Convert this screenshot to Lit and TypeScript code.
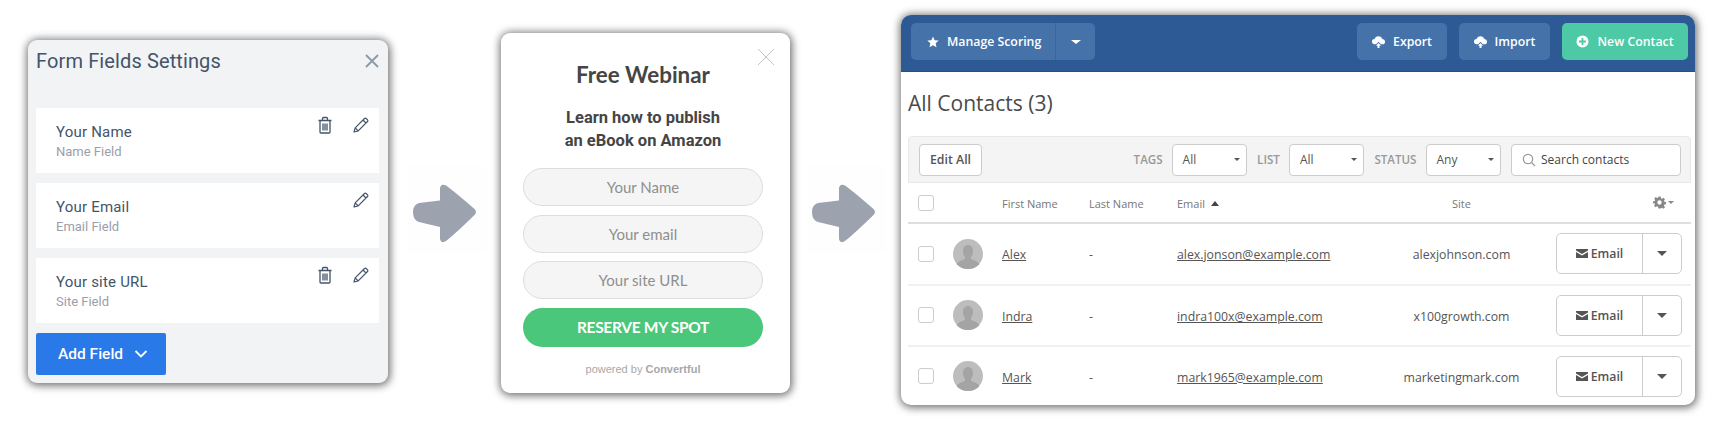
import { LitElement, html, css } from "lit";
import { customElement } from "lit/decorators.js";

const trash = html`<svg class="ic trash" width="16" height="18" viewBox="0 0 16 18" fill="none" stroke="#44546a" stroke-width="1.300"><path d="M1.500 4.500h13M3 4.500V16a1 1 0 0 0 1 1h8a1 1 0 0 0 1-1V4.500M5.500 4.500V2.500a1 1 0 0 1 1-1h3a1 1 0 0 1 1 1v2M6 7.500v7M8 7.500v7M10 7.500v7"/></svg>`;
const pencil = html`<svg class="ic" width="16" height="16" viewBox="0 0 16 16" fill="none" stroke="#44546a" stroke-width="1.200" stroke-linejoin="round"><path d="M1 15l1.200-4.200L11.500 1.500a1.200 1.200 0 0 1 1.700 0l1.300 1.300a1.200 1.200 0 0 1 0 1.700L5.200 13.800zM2.200 10.800l3 3M10 3l3 3"/></svg>`;
const cloud = html`<svg width="13" height="12" viewBox="0 0 13 12" fill="#fff"><path d="M2.800 8.300a2.700 2.700 0 0 1-.3-5.400A3.900 3.900 0 0 1 6.500.2a3.900 3.900 0 0 1 3.900 2.700 2.700 2.700 0 0 1-.2 5.400H8.900L6.500 5.700 4.100 8.300z"/><path d="M6.500 7 9 9.700H7.500V12h-2V9.700H4z"/></svg>`;
const caret = (w = 7, h = w) => html`<span class="caret" style="border-width:${h}px ${w}px 0"></span>`;
const avatar = html`<svg class="avatar" width="30" height="30" viewBox="0 0 30 30"><circle cx="15" cy="15" r="15" fill="#bdbdbd"/><path d="M3.500 25c1.500-2.300 3.500-3.300 6.700-4.300 1.800-.7 2-1.500 1.800-2.700-1.300-1.300-2-3.500-2-6.200C10 8.500 12 6 15 6s5 2.500 5 5.800c0 2.700-.7 4.900-2 6.200-.2 1.200 0 2 1.800 2.700 3.200 1 5.200 2 6.700 4.300A15 15 0 0 1 15 30 15 15 0 0 1 3.500 25z" fill="#a4a4a4"/></svg>`;
const arrow = html`<div class="arrowbox"><svg width="64" height="60" viewBox="0 0 64 60"><path d="M6 19 L27 16.500 L27 4 Q28 -1 33 1.500 Q42 8 61.500 25 Q64.500 28 61.500 31 Q42 50 33 57 Q28 60 27 55 L27 43 L6 38 Q0 36 0 28 Q0 21 6 19Z" fill="#9ca3af"/></svg></div>`;

@customElement("app-root")
export class AppRoot extends LitElement {
  static styles = css`
    :host { display: block; width: 1725px; height: 430px; background: #fff; overflow: hidden; }
    .page { display: flex; align-items: flex-start; height: 430px; }

    .arrowbox { width: 79px; height: 87px; margin-top: 166px; box-sizing: border-box; padding: 18px 0 0 5px; background: #fefefe; flex: none; }
    .arrowbox svg { display: block; }

    /* Form settings */
    .settings { flex: none; width: 360px; height: 343px; margin: 40px 20px 0 28px; box-sizing: border-box; padding: 0 9px 0 8px; background: #f1f3f5; border-radius: 9px; box-shadow: 0 0 8px 1px rgba(0,0,0,.35), 1px 2px 8px 1px rgba(0,0,0,.35); font-family: Roboto, sans-serif; color: #44546a; }
    .s-head { display: flex; justify-content: space-between; align-items: center; height: 42px; margin-bottom: 26px; }
    .s-title { font-size: 20px; letter-spacing: .12px; }
    .s-list { display: flex; flex-direction: column; gap: 10px; }
    .field { height: 65px; background: #fff; box-sizing: border-box; padding: 14px 10px 0 20px; display: flex; justify-content: space-between; }
    .f-name { font-size: 15px; line-height: 20px; letter-spacing: .2px; }
    .f-type { font-size: 13px; line-height: 18px; color: #9b9eaa; margin-top: 1px; }
    .f-actions { display: flex; gap: 19px; margin-top: -5px; align-items: flex-start; }
    .trash { margin-top: -1px; margin-right: 1px; }
    .add { margin-top: 10px; width: 130px; height: 42px; background: #2979e8; border-radius: 2px; color: #fff; font-size: 15.500px; font-weight: 500; display: flex; align-items: center; gap: 11px; box-sizing: border-box; padding-left: 22px; }

    /* Webinar */
    .webinar { flex: none; width: 289px; height: 360px; margin: 33px 17px 0 14px; box-sizing: border-box; padding: 0 27px 0 22px; background: #fff; border-radius: 9px; box-shadow: 0 0 8px 1px rgba(0,0,0,.35), 1px 2px 8px 1px rgba(0,0,0,.35); display: flex; flex-direction: column; align-items: stretch; text-align: center; position: relative; }
    .w-x { position: absolute; top: 15px; right: 15px; }
    .w-title { font-family: Lato, sans-serif; font-weight: 700; font-size: 22.400px; line-height: 30px; color: #454545; margin-top: 27px; }
    .w-sub { font-family: Roboto, sans-serif; font-weight: 700; font-size: 16.500px; line-height: 23px; color: #454545; margin-top: 16px; margin-bottom: 16px; }
    .w-input { height: 38px; box-sizing: border-box; border: 1px solid #ddd; border-radius: 19px; background: #f5f5f5; font-family: Lato, sans-serif; font-size: 15px; line-height: 36px; color: #8f8f8f; margin-bottom: 9px; }
    .w-input.mid { margin-bottom: 8px; }
    .w-btn { height: 39px; line-height: 39px; border-radius: 20px; background: #4ac77b; color: #fff; font-family: Lato, sans-serif; font-weight: 700; font-size: 15.500px; letter-spacing: -.3px; }
    .w-foot { font-family: "Liberation Sans", sans-serif; font-size: 11px; color: #a8a8a8; margin-top: 16px; }
    .w-foot b { font-weight: 700; }

    /* Contacts */
    .contacts { flex: none; width: 794px; height: 390px; margin: 15px 0 0 15px; background: #fff; border-radius: 10px; overflow: hidden; box-shadow: 0 0 8px 1px rgba(0,0,0,.35), 1px 2px 8px 1px rgba(0,0,0,.35); font-family: "Open Sans", sans-serif; color: #555; }
    .bar { height: 57px; background: #2d5a94; border-bottom: 1px solid #274f86; box-sizing: border-box; display: flex; align-items: flex-start; padding: 8px 7px 0 10px; gap: 12px; }
    .bar .spacer { flex: 1; }
    .hbtn { height: 37px; border-radius: 5px; background: #4672aa; color: #fff; font-size: 12.300px; font-weight: 600; display: flex; align-items: center; justify-content: center; gap: 8px; box-sizing: border-box; }
    .split { width: 184px; justify-content: flex-start; gap: 0; }
    .split .main { width: 145px; height: 37px; border-right: 1px solid #3d6599; box-sizing: border-box; display: flex; align-items: center; gap: 8px; padding-left: 16px; }
    .split .drop { flex: 1; display: flex; justify-content: center; }
    .caret { display: inline-block; width: 0; height: 0; border-style: solid; border-color: currentColor transparent transparent; }
    .export { width: 90px; }
    .import { width: 91px; }
    .new { width: 126px; background: #4dc9a5; }

    h2 { margin: 0; font-weight: 500; font-size: 21px; line-height: 28px; color: #4a4a4a; padding: 17px 0 0 7px; height: 47px; box-sizing: content-box; }

    .tools { margin: 0 4px 0 7px; height: 47px; box-sizing: border-box; background: #f4f4f4; border: 1px solid #e8e8e8; border-radius: 4px 4px 0 0; display: flex; align-items: center; padding: 0 9px 0 10px; font-size: 12px; }
    .tools .spacer { flex: 1; }
    .edit { width: 63px; height: 32px; background: #fff; border: 1px solid #ccc; border-radius: 4px; box-sizing: border-box; display: flex; align-items: center; justify-content: center; font-weight: 600; font-size: 12.300px; color: #555; }
    .lab { color: #999; font-weight: 600; font-size: 11.600px; margin-right: 9px; }
    .sel { width: 75.500px; height: 32px; box-sizing: border-box; background: #fff; border: 1px solid #ccc; border-radius: 4px; display: flex; align-items: center; justify-content: space-between; padding: 0 6px 0 10px; margin-right: 10px; color: #555; }
    .search { width: 170px; height: 32px; box-sizing: border-box; background: #fff; border: 1px solid #ccc; border-radius: 4px; display: flex; align-items: center; gap: 5px; padding-left: 10px; color: #444; }

    .row { margin: 0 4px 0 7px; display: grid; grid-template-columns: 35px 49px 87px 88px 215px 1fr 126px; align-items: center; box-sizing: border-box; padding-left: 10px; padding-right: 9px; font-size: 12.300px; height: 61.500px; border-bottom: 2px solid #f1f1f1; }
    .row.head { height: 41px; font-size: 11px; color: #777; border-bottom: 2px solid #dedede; }
    .row.last { border-bottom: 0; height: 58px; }
    .cb { width: 16px; height: 16px; box-sizing: border-box; border: 1px solid #ccc; border-radius: 3px; background: #fff; display: block; }
    .cell { padding-top: 2px; }
    .site { text-align: center; padding-right: 25px; }
    a { color: #555; text-decoration: underline; }
    .sort { display: inline-flex; align-items: center; gap: 6px; }
    .gear { justify-self: end; display: flex; align-items: center; gap: 2px; color: #888; margin-right: 8px; }
    .action { height: 41px; width: 126px; box-sizing: border-box; border: 1px solid #ccc; border-radius: 5px; display: flex; align-items: center; font-weight: 600; color: #555; }
    .action .m { width: 85px; height: 100%; border-right: 1px solid #ccc; display: flex; align-items: center; justify-content: center; gap: 3px; box-sizing: content-box; }
    .action .d { flex: 1; display: flex; justify-content: center; }
  `;

  field(name: string, type: string, del: boolean) {
    return html`<div class="field"><div><div class="f-name">${name}</div><div class="f-type">${type}</div></div>
      <div class="f-actions">${del ? trash : ""}${pencil}</div></div>`;
  }

  contact(n: string, e: string, s: string, last = false) {
    return html`<div class="row ${last ? "last" : ""}">
      <span class="cb"></span>${avatar}<a class="cell">${n}</a><span class="cell">-</span><a class="cell">${e}</a><span class="cell site">${s}</span>
      <div class="action"><div class="m"><svg width="12" height="9" viewBox="0 0 12 9" fill="#555"><path d="M0 0h12v1.500L6 5 0 1.500z"/><path d="M0 3l6 3.500L12 3v6H0z"/></svg>Email</div><div class="d">${caret(5, 5)}</div></div>
    </div>`;
  }

  render() {
    return html`<div class="page">
      <section class="settings">
        <div class="s-head"><span class="s-title">Form Fields Settings</span>
          <svg width="14" height="14" viewBox="0 0 14 14" stroke="#8d99a8" stroke-width="1.800"><path d="M1 1l12 12M13 1 1 13"/></svg></div>
        <div class="s-list">
          ${this.field("Your Name", "Name Field", true)}
          ${this.field("Your Email", "Email Field", false)}
          ${this.field("Your site URL", "Site Field", true)}
        </div>
        <div class="add">Add Field <svg width="14" height="8" viewBox="0 0 14 8" fill="none" stroke="#fff" stroke-width="1.800"><path d="M1.500 1 7 6.500 12.500 1"/></svg></div>
      </section>
      ${arrow}
      <section class="webinar">
        <svg class="w-x" width="18" height="18" viewBox="0 0 18 18" stroke="#c4c4c4" stroke-width="1"><path d="M1 1l16 16M17 1 1 17"/></svg>
        <div class="w-title">Free Webinar</div>
        <div class="w-sub">Learn how to publish<br />an eBook on Amazon</div>
        <div class="w-input">Your Name</div>
        <div class="w-input mid">Your email</div>
        <div class="w-input">Your site URL</div>
        <div class="w-btn">RESERVE MY SPOT</div>
        <div class="w-foot">powered by <b>Convertful</b></div>
      </section>
      ${arrow}
      <section class="contacts">
        <div class="bar">
          <div class="hbtn split"><div class="main"><svg width="12" height="12" viewBox="0 0 24 24" fill="#fff"><path d="M12 1l3.300 7.400 8 .8-6 5.400 1.700 7.900L12 18.500 5 22.500l1.700-7.900-6-5.400 8-.8z"/></svg>Manage Scoring</div><div class="drop">${caret(5, 4)}</div></div>
          <div class="spacer"></div>
          <div class="hbtn export">${cloud}Export</div>
          <div class="hbtn import">${cloud}Import</div>
          <div class="hbtn new"><svg width="13" height="13" viewBox="0 0 13 13"><circle cx="6.500" cy="6.500" r="6" fill="#fff"/><path d="M3 6.500h7M6.500 3v7" stroke="#4dc9a5" stroke-width="1.800"/></svg>New Contact</div>
        </div>
        <h2>All Contacts (3)</h2>
        <div class="tools">
          <div class="edit">Edit All</div><div class="spacer"></div>
          <span class="lab">TAGS</span><div class="sel">All ${caret(3.500, 3.500)}</div>
          <span class="lab">LIST</span><div class="sel">All ${caret(3.500, 3.500)}</div>
          <span class="lab">STATUS</span><div class="sel">Any ${caret(3.500, 3.500)}</div>
          <div class="search"><svg width="14" height="14" viewBox="0 0 14 14" fill="none" stroke="#999" stroke-width="1.200"><circle cx="6" cy="6" r="4.700"/><path d="M9.500 9.500 13 13"/></svg>Search contacts</div>
        </div>
        <div class="row head">
          <span class="cb"></span><span></span><span class="cell">First Name</span><span class="cell">Last Name</span>
          <span class="sort cell">Email <span class="caret" style="border-width:0 4.500px 5px;border-color:transparent transparent #444"></span></span>
          <span class="cell site">Site</span>
          <div class="gear"><svg width="13" height="13" viewBox="0 0 24 24" fill="#888"><path fill-rule="evenodd" d="M10 1h4l.6 3.200 2 .8 2.700-1.800 2.800 2.800-1.800 2.700.8 2 3.200.6v4l-3.200.6-.8 2 1.800 2.700-2.800 2.800-2.700-1.800-2 .8L14 23h-4l-.6-3.200-2-.8-2.700 1.800-2.800-2.800 1.800-2.700-.8-2L0 14v-4l3.200-.6.8-2L2.200 4.700 5 1.900l2.700 1.800 2-.8zM12 8a4 4 0 1 0 0 8 4 4 0 0 0 0-8z"/></svg>${caret(3, 3)}</div>
        </div>
        ${this.contact("Alex", "alex.jonson@example.com", "alexjohnson.com")}
        ${this.contact("Indra", "indra100x@example.com", "x100growth.com")}
        ${this.contact("Mark", "mark1965@example.com", "marketingmark.com", true)}
      </section>
    </div>`;
  }
}
